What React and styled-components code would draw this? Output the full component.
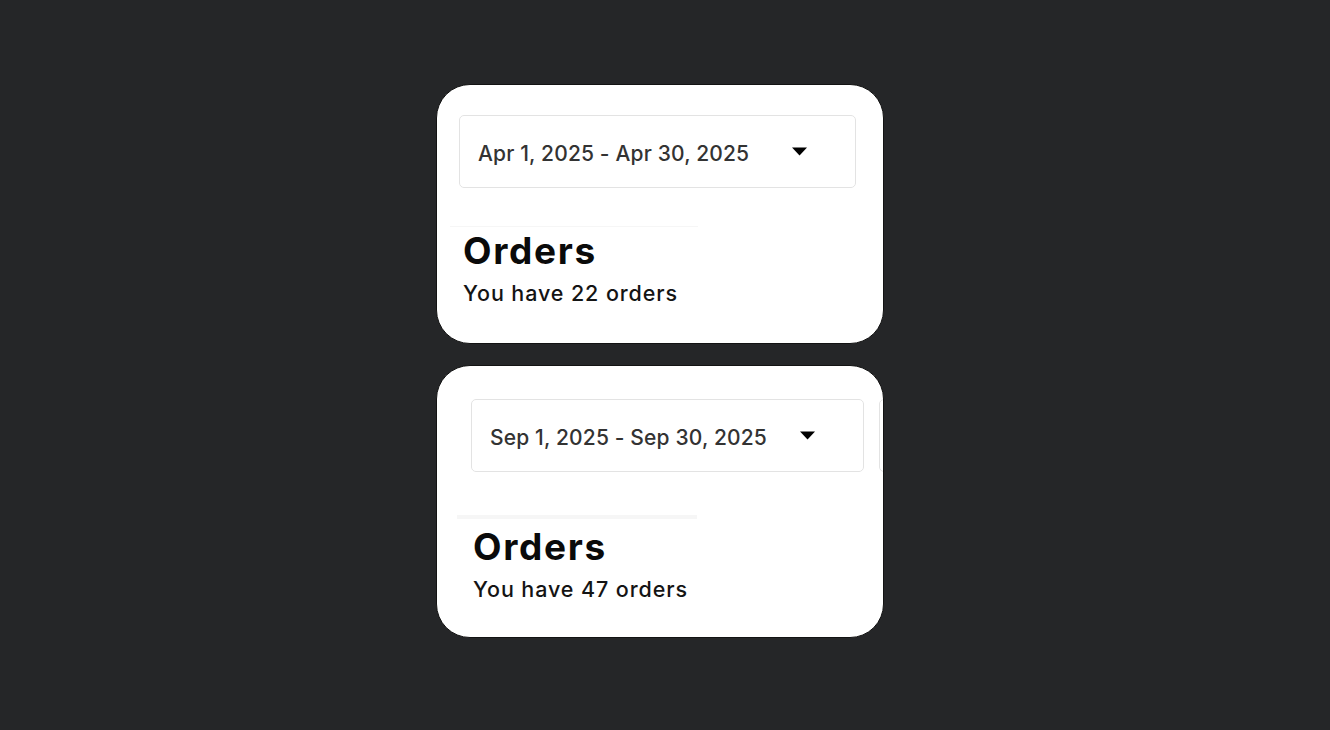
import React from 'react'
import styled, { createGlobalStyle } from 'styled-components'

const GlobalStyle = createGlobalStyle`
  html, body {
    margin: 0;
    padding: 0;
    background: #252628;
    font-family: Inter, 'Noto Sans', sans-serif;
  }
`

const Page = styled.div`
  min-height: 730px;
  display: flex;
  flex-direction: column;
  align-items: flex-start;
  gap: 21px;
  padding: 84px 0 0 436px;
  box-sizing: border-box;
`

const Card = styled.div`
  width: 448px;
  height: ${(p) => p.h}px;
  box-sizing: border-box;
  background: #fff;
  border: 1px solid #131313;
  border-radius: 34px;
  overflow: hidden;
  padding: ${(p) => p.pad};
`

const FilterRow = styled.div`
  display: flex;
  gap: 15px;
  width: max-content;
`

const Select = styled.div`
  width: ${(p) => p.w}px;
  height: 73px;
  box-sizing: border-box;
  border: 1px solid #e3e3e3;
  border-radius: 5px;
  display: flex;
  align-items: center;
  padding: 4px 48px 0 18px;
  color: #333;
  font-size: 21px;
  font-weight: 500;
  letter-spacing: 0.15px;
`

const SelectText = styled.span`
  flex: 1;
  white-space: nowrap;
`

const Caret = styled.svg`
  width: 15px;
  height: 9px;
  margin-top: -4px;
  flex: none;
`

const Divider = styled.div`
  width: ${(p) => p.w}px;
  height: ${(p) => p.h}px;
  background: #f6f6f6;
  margin: ${(p) => p.m};
`

const Title = styled.h2`
  margin: ${(p) => p.mt}px 0 0;
  font-size: 37px;
  font-weight: 700;
  color: #0a0a0a;
  letter-spacing: 1.7px;
  line-height: 40px;
`

const Sub = styled.p`
  margin: 8px 0 0;
  font-size: 21.5px;
  font-weight: 500;
  color: #141414;
  letter-spacing: 0.9px;
  line-height: 28px;
`

const Block = styled.div`
  padding-left: ${(p) => p.pl}px;
`

const DateSelect = ({ label, w }) => (
  <Select w={w}>
    <SelectText>{label}</SelectText>
    <Caret viewBox="0 0 15 9">
      <polygon points="0,0.5 15,0.5 7.5,8.5" fill="#000" />
    </Caret>
  </Select>
)

export default function App() {
  return (
    <>
      <GlobalStyle />
      <Page>
        <Card h={260} pad="30px 0 0 22px">
          <DateSelect label="Apr 1, 2025 - Apr 30, 2025" w={397} />
          <Divider w={248} h={1} m="38px 0 0 -9px" />
          <Block pl={4}>
            <Title mt={4}>Orders</Title>
            <Sub>You have 22 orders</Sub>
          </Block>
        </Card>
        <Card h={273} pad="33px 0 0 34px">
          <FilterRow>
            <DateSelect label="Sep 1, 2025 - Sep 30, 2025" w={393} />
            <Select w={120} />
          </FilterRow>
          <Divider w={240} h={4} m="43px 0 0 -14px" />
          <Block pl={2}>
            <Title mt={8}>Orders</Title>
            <Sub>You have 47 orders</Sub>
          </Block>
        </Card>
      </Page>
    </>
  )
}
